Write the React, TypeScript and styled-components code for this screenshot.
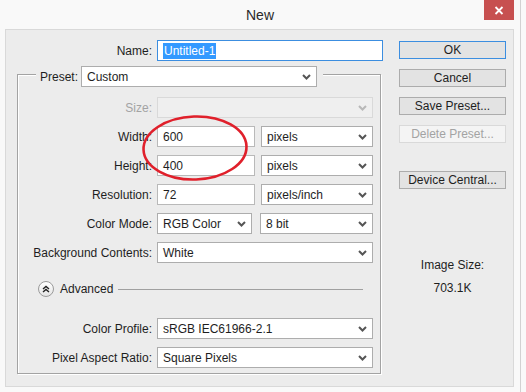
import React from "react"
import styled, { createGlobalStyle } from "styled-components"

const GlobalStyle = createGlobalStyle`
  html, body {
    margin: 0;
    padding: 0;
    background: #f9f9f9;
  }
  body {
    font-family: "Liberation Sans", Arial, sans-serif;
    font-size: 12px;
    color: #1e1e1e;
  }
`

const Window = styled.div`
  position: relative;
  box-sizing: border-box;
  width: 521px;
  height: 392px;
  border-right: 1px solid #d2d2d2;
  background: #f9f9f9;
  display: flex;
  flex-direction: column;
`

const TitleBar = styled.div`
  height: 29px;
  display: flex;
  align-items: center;
  justify-content: center;
  font-size: 14px;
  color: #2b2b2b;
`

const CloseButton = styled.div`
  position: absolute;
  top: 0;
  right: 6px;
  width: 30px;
  height: 20px;
  background: #c75050;
  display: flex;
  align-items: center;
  justify-content: center;
`

const Panel = styled.div`
  flex: 1;
  margin: 0 6px 5px 5px;
  border: 1px solid #d9d9d9;
  background: #ececec;
  display: flex;
  padding-top: 10px;
`

const LeftCol = styled.div`
  width: 378px;
  display: flex;
  flex-direction: column;
`

const RightCol = styled.div`
  width: 107px;
  margin-left: 15px;
  padding-top: 1px;
  display: flex;
  flex-direction: column;
`

const Row = styled.div<{ $top?: number }>`
  display: flex;
  align-items: center;
  gap: 5px;
  height: 21px;
  margin-top: ${(p) => p.$top ?? 0}px;
`

const Label = styled.div<{ $w: number; $disabled?: boolean }>`
  width: ${(p) => p.$w}px;
  text-align: right;
  white-space: nowrap;
  color: ${(p) => (p.$disabled ? "#a3a3a3" : "#1e1e1e")};
`

const TextBox = styled.div<{ $w: number; $focused?: boolean }>`
  box-sizing: border-box;
  width: ${(p) => p.$w}px;
  height: 21px;
  padding-left: 5px;
  display: flex;
  align-items: center;
  background: #fff;
  border: 1px solid ${(p) => (p.$focused ? "#3c8ee0" : "#b9b9b9")};
`

const Selected = styled.span`
  background: #3399ff;
  color: #fff;
  padding: 1px 1px;
`

const SelectBox = styled.div<{ $w: number; $disabled?: boolean; $shift?: number }>`
  box-sizing: border-box;
  width: ${(p) => p.$w}px;
  height: 21px;
  margin-left: ${(p) => p.$shift ?? 0}px;
  padding: 0 5px 0 5px;
  display: flex;
  align-items: center;
  justify-content: space-between;
  background: ${(p) => (p.$disabled ? "#efefef" : "#fff")};
  border: 1px solid ${(p) => (p.$disabled ? "#d9d9d9" : "#adadad")};
  white-space: nowrap;
`

const Group = styled.div`
  box-sizing: border-box;
  width: 364px;
  margin: 13px 0 0 11px;
  border: 1px solid #a3a3a3;
  box-shadow: 1px 1px 0 #fff, inset 1px 1px 0 #fff;
  padding-bottom: 5px;
  display: flex;
  flex-direction: column;
`

const GroupHeader = styled.div`
  align-self: flex-start;
  margin: -9px 0 0 18px;
  padding: 0 6px 0 4px;
  background: #ececec;
  display: flex;
  align-items: center;
  gap: 3px;
  height: 21px;
`

const RowStack = styled.div<{ $top: number }>`
  display: flex;
  flex-direction: column;
  gap: 8px;
  margin-top: ${(p) => p.$top}px;
`

const AdvancedRow = styled.div`
  display: flex;
  align-items: center;
  height: 16px;
  margin-top: 18px;
  padding-left: 20px;
`

const CircleButton = styled.div`
  box-sizing: border-box;
  width: 16px;
  height: 16px;
  border-radius: 50%;
  border: 1px solid #9b9b9b;
  background: linear-gradient(#ffffff, #e4e4e4);
  display: flex;
  align-items: center;
  justify-content: center;
`

const AdvancedText = styled.span`
  margin-left: 6px;
`

const Rule = styled.div`
  width: 245px;
  height: 1px;
  margin-left: 5px;
  background: #a0a0a0;
`

const Button = styled.div<{ $default?: boolean; $disabled?: boolean; $top?: number }>`
  box-sizing: border-box;
  height: 18px;
  margin-top: ${(p) => p.$top ?? 0}px;
  display: flex;
  align-items: center;
  justify-content: center;
  background: ${(p) => (p.$disabled ? "#f4f4f4" : "#e3e3e3")};
  border: 1px solid
    ${(p) => (p.$default ? "#3c8ee0" : p.$disabled ? "#d9d9d9" : "#acacac")};
  color: ${(p) => (p.$disabled ? "#a3a3a3" : "#1e1e1e")};
`

const InfoText = styled.div<{ $top: number }>`
  margin-top: ${(p) => p.$top}px;
  line-height: 16px;
  text-align: center;
`

const Annotation = styled.svg`
  position: absolute;
  left: 141px;
  top: 114px;
  pointer-events: none;
`

const Chevron = ({ disabled }: { disabled?: boolean }) => (
  <svg width="9" height="6" viewBox="0 0 9 6">
    <path
      d="M1 1 L4.5 4.5 L8 1"
      fill="none"
      stroke={disabled ? "#b8b8b8" : "#555"}
      strokeWidth="2"
    />
  </svg>
)

const Select = ({
  w,
  value,
  disabled,
  shift,
}: {
  w: number
  value?: string
  disabled?: boolean
  shift?: number
}) => (
  <SelectBox $w={w} $disabled={disabled} $shift={shift}>
    <span>{value}</span>
    <Chevron disabled={disabled} />
  </SelectBox>
)

const FIELD_LABEL = 134
const FULL = 216

const App: React.FunctionComponent = () => {
  return (
    <Window>
      <GlobalStyle />
      <TitleBar>New</TitleBar>
      <CloseButton>
        <svg width="10" height="9" viewBox="0 0 10 9">
          <path d="M1.5 1 L8.5 8 M8.5 1 L1.5 8" stroke="#fff" strokeWidth="1.8" />
        </svg>
      </CloseButton>
      <Panel>
        <LeftCol>
          <Row>
            <Label $w={146}>Name:</Label>
            <TextBox $w={226} $focused>
              <Selected>Untitled-1</Selected>
            </TextBox>
          </Row>
          <Group>
            <GroupHeader>
              <span>Preset:</span>
              <Select w={236} value="Custom" />
            </GroupHeader>
            <RowStack $top={10}>
              <Row>
                <Label $w={FIELD_LABEL} $disabled>
                  Size:
                </Label>
                <Select w={FULL} disabled />
              </Row>
              <Row>
                <Label $w={FIELD_LABEL}>Width:</Label>
                <TextBox $w={98}>600</TextBox>
                <Select w={112} value="pixels" shift={1} />
              </Row>
              <Row>
                <Label $w={FIELD_LABEL}>Height:</Label>
                <TextBox $w={98}>400</TextBox>
                <Select w={112} value="pixels" shift={1} />
              </Row>
              <Row>
                <Label $w={FIELD_LABEL}>Resolution:</Label>
                <TextBox $w={98}>72</TextBox>
                <Select w={112} value="pixels/inch" shift={1} />
              </Row>
              <Row>
                <Label $w={FIELD_LABEL}>Color Mode:</Label>
                <Select w={95} value="RGB Color" />
                <Select w={113} value="8 bit" shift={3} />
              </Row>
              <Row>
                <Label $w={FIELD_LABEL}>Background Contents:</Label>
                <Select w={FULL} value="White" />
              </Row>
            </RowStack>
            <AdvancedRow>
              <CircleButton>
                <svg width="8" height="8" viewBox="0 0 8 8">
                  <path
                    d="M1 4 L4 1.5 L7 4 M1 7 L4 4.5 L7 7"
                    fill="none"
                    stroke="#222"
                    strokeWidth="1.4"
                  />
                </svg>
              </CircleButton>
              <AdvancedText>Advanced</AdvancedText>
              <Rule />
            </AdvancedRow>
            <RowStack $top={21}>
              <Row>
                <Label $w={FIELD_LABEL}>Color Profile:</Label>
                <Select w={FULL} value="sRGB IEC61966-2.1" />
              </Row>
              <Row>
                <Label $w={FIELD_LABEL}>Pixel Aspect Ratio:</Label>
                <Select w={FULL} value="Square Pixels" />
              </Row>
            </RowStack>
          </Group>
        </LeftCol>
        <RightCol>
          <Button $default>OK</Button>
          <Button $top={10}>Cancel</Button>
          <Button $top={10}>Save Preset...</Button>
          <Button $top={10} $disabled>
            Delete Preset...
          </Button>
          <Button $top={28}>Device Central...</Button>
          <InfoText $top={68}>Image Size:</InfoText>
          <InfoText $top={7}>703.1K</InfoText>
        </RightCol>
      </Panel>
      <Annotation width="110" height="70" viewBox="0 0 110 70">
        <ellipse
          cx="54"
          cy="34"
          rx="51.5"
          ry="31.5"
          fill="none"
          stroke="#e0202b"
          strokeWidth="2.6"
          transform="rotate(-2 54 34)"
        />
      </Annotation>
    </Window>
  )
}

export default App
